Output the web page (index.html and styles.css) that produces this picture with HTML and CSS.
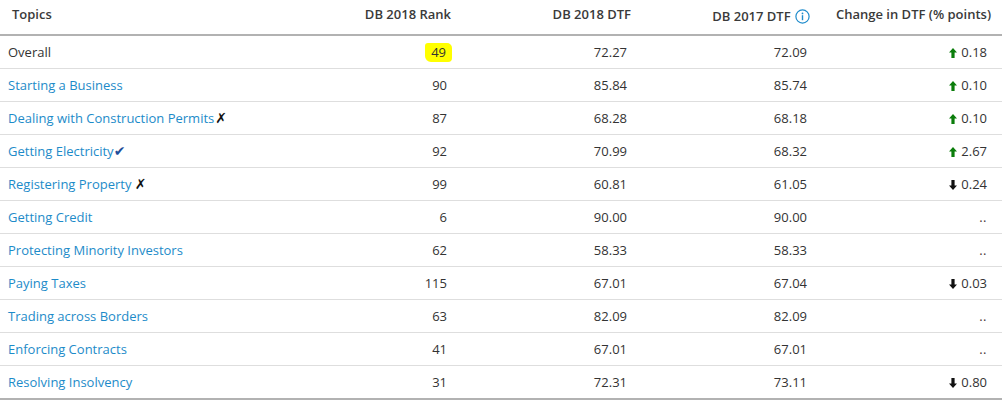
FILE: index.html
```html
<!DOCTYPE html>
<html lang="en">
<head>
<meta charset="utf-8">
<title>Doing Business Topics</title>
<link rel="stylesheet" href="styles.css">
</head>
<body>
<table class="db-table">
  <thead>
    <tr>
      <th class="col-topic">Topics</th>
      <th class="col-num">DB 2018 Rank</th>
      <th class="col-num">DB 2018 DTF</th>
      <th class="col-num col-info">DB 2017 DTF <span class="info-icon"><svg width="15" height="15" viewBox="0 0 15 15"><circle cx="7.5" cy="7.5" r="6.6" fill="none" stroke="#1f8ccc" stroke-width="1.2"/><circle cx="7.5" cy="4.4" r="0.9" fill="#1f8ccc"/><rect x="6.8" y="6.2" width="1.4" height="5" fill="#1f8ccc"/></svg></span></th>
      <th class="col-num">Change in DTF (% points)</th>
    </tr>
  </thead>
  <tbody>
    <tr>
      <td class="topic plain">Overall</td>
      <td class="num"><span class="hl">49</span></td>
      <td class="num">72.27</td>
      <td class="num">72.09</td>
      <td class="num"><span class="arrow up"><svg width="8" height="10" viewBox="0 0 8 10"><polygon points="4,0 8,4.6 5.6,4.6 5.6,10 2.4,10 2.4,4.6 0,4.6" fill="#0b7d0b"/></svg></span>0.18</td>
    </tr>
    <tr>
      <td class="topic">Starting a Business</td>
      <td class="num">90</td>
      <td class="num">85.84</td>
      <td class="num">85.74</td>
      <td class="num"><span class="arrow up"><svg width="8" height="10" viewBox="0 0 8 10"><polygon points="4,0 8,4.6 5.6,4.6 5.6,10 2.4,10 2.4,4.6 0,4.6" fill="#0b7d0b"/></svg></span>0.10</td>
    </tr>
    <tr>
      <td class="topic">Dealing with Construction Permits<span class="mark cross tight">✗</span></td>
      <td class="num">87</td>
      <td class="num">68.28</td>
      <td class="num">68.18</td>
      <td class="num"><span class="arrow up"><svg width="8" height="10" viewBox="0 0 8 10"><polygon points="4,0 8,4.6 5.6,4.6 5.6,10 2.4,10 2.4,4.6 0,4.6" fill="#0b7d0b"/></svg></span>0.10</td>
    </tr>
    <tr>
      <td class="topic">Getting Electricity<span class="mark check">✔</span></td>
      <td class="num">92</td>
      <td class="num">70.99</td>
      <td class="num">68.32</td>
      <td class="num"><span class="arrow up"><svg width="8" height="10" viewBox="0 0 8 10"><polygon points="4,0 8,4.6 5.6,4.6 5.6,10 2.4,10 2.4,4.6 0,4.6" fill="#0b7d0b"/></svg></span>2.67</td>
    </tr>
    <tr>
      <td class="topic">Registering Property <span class="mark cross">✗</span></td>
      <td class="num">99</td>
      <td class="num">60.81</td>
      <td class="num">61.05</td>
      <td class="num"><span class="arrow down"><svg width="8" height="10" viewBox="0 0 8 10"><polygon points="4,10 8,5.4 5.6,5.4 5.6,0 2.4,0 2.4,5.4 0,5.4" fill="#111"/></svg></span>0.24</td>
    </tr>
    <tr>
      <td class="topic">Getting Credit</td>
      <td class="num">6</td>
      <td class="num">90.00</td>
      <td class="num">90.00</td>
      <td class="num dots">..</td>
    </tr>
    <tr>
      <td class="topic">Protecting Minority Investors</td>
      <td class="num">62</td>
      <td class="num">58.33</td>
      <td class="num">58.33</td>
      <td class="num dots">..</td>
    </tr>
    <tr>
      <td class="topic">Paying Taxes</td>
      <td class="num">115</td>
      <td class="num">67.01</td>
      <td class="num">67.04</td>
      <td class="num"><span class="arrow down"><svg width="8" height="10" viewBox="0 0 8 10"><polygon points="4,10 8,5.4 5.6,5.4 5.6,0 2.4,0 2.4,5.4 0,5.4" fill="#111"/></svg></span>0.03</td>
    </tr>
    <tr>
      <td class="topic">Trading across Borders</td>
      <td class="num">63</td>
      <td class="num">82.09</td>
      <td class="num">82.09</td>
      <td class="num dots">..</td>
    </tr>
    <tr>
      <td class="topic">Enforcing Contracts</td>
      <td class="num">41</td>
      <td class="num">67.01</td>
      <td class="num">67.01</td>
      <td class="num dots">..</td>
    </tr>
    <tr class="last">
      <td class="topic">Resolving Insolvency</td>
      <td class="num">31</td>
      <td class="num">72.31</td>
      <td class="num">73.11</td>
      <td class="num"><span class="arrow down"><svg width="8" height="10" viewBox="0 0 8 10"><polygon points="4,10 8,5.4 5.6,5.4 5.6,0 2.4,0 2.4,5.4 0,5.4" fill="#111"/></svg></span>0.80</td>
    </tr>
  </tbody>
</table>
</body>
</html>
```

FILE: styles.css
```css
html, body {
  margin: 0;
  padding: 0;
  background: #ffffff;
}

body {
  font-family: "Open Sans", "Liberation Sans", sans-serif;
  font-size: 13px;
  color: #333333;
}

.db-table {
  width: 1002px;
  border-collapse: collapse;
  table-layout: fixed;
}

.db-table th {
  height: 35px;
  padding: 5px 11px 0 11px;
  box-sizing: border-box;
  vertical-align: top;
  font-weight: 600;
  line-height: 18px;
  color: #3a3a3a;
  border-bottom: 2px solid #b2b2b2;
  white-space: nowrap;
}

.db-table .col-topic {
  width: 282px;
  text-align: left;
  padding-left: 12px;
}

.db-table .col-num {
  width: 180px;
  text-align: right;
}

.db-table .col-info {
  padding-top: 7px;
  padding-right: 12px;
}

.info-icon {
  display: inline-block;
  vertical-align: -3px;
  margin-left: 1px;
}

.info-icon svg {
  display: block;
}

.db-table td {
  height: 32px;
  padding: 0 15px 0 8px;
  line-height: 18px;
  vertical-align: middle;
  border-bottom: 1px solid #dedede;
  white-space: nowrap;
}

.db-table tr.last td {
  border-bottom: 2px solid #b2b2b2;
}

.db-table td.topic {
  color: #1d8bc9;
  padding-left: 8px;
}

.db-table td.topic.plain {
  color: #333333;
}

.db-table td.num {
  text-align: right;
}

.hl {
  display: inline-block;
  background: #ffff00;
  padding: 1px 6px 1px 6px;
  margin-right: -5px;
  border-radius: 3px 5px 4px 6px;
  line-height: 17px;
}

.mark {
  font-family: "DejaVu Sans", sans-serif;
  font-size: 14px;
  line-height: 14px;
}

.mark.cross {
  color: #111111;
}

.mark.tight {
  margin-left: 1px;
}

.mark.check {
  color: #1f4f9a;
}

.arrow {
  display: inline-block;
  vertical-align: -1px;
  margin-right: 4px;
}

.arrow svg {
  display: block;
}

.dots {
  color: #4a3a3a;
  letter-spacing: 0.5px;
}
```
